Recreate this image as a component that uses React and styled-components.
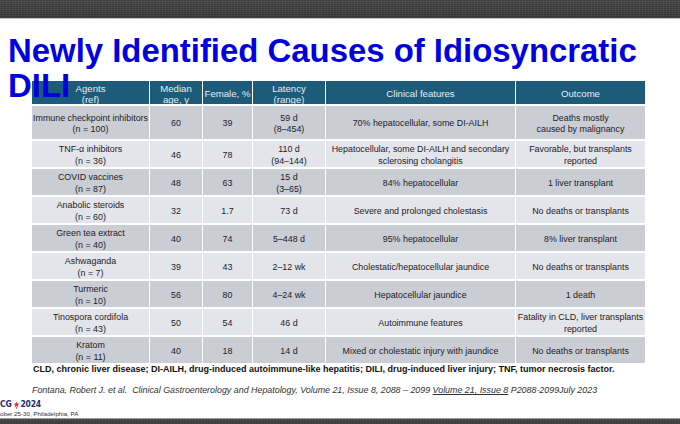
import React from "react";
import styled, { createGlobalStyle } from "styled-components";

const Global = createGlobalStyle`
  html, body { margin: 0; padding: 0; background: #ffffff; }
  body { font-family: "Liberation Sans", Arial, sans-serif; }
`;

const Screen = styled.div`
  width: 680px;
  height: 424px;
  display: flex;
  flex-direction: column;
  overflow: hidden;
  background: #ffffff;
`;

const DarkBar = styled.div`
  flex: none;
  height: ${(p) => p.$h}px;
  background:
    repeating-linear-gradient(90deg, rgba(255,255,255,0.03) 0 1px, rgba(0,0,0,0.04) 1px 3px),
    repeating-linear-gradient(0deg, rgba(255,255,255,0.03) 0 1px, rgba(0,0,0,0.05) 1px 2px),
    linear-gradient(#474747, #3a3a3a);
  border-bottom: ${(p) => (p.$line ? "1px solid #c4c4c4" : "none")};
  border-top: ${(p) => (p.$topline ? "1px solid #9a9a9a" : "none")};
`;

const Slide = styled.div`
  flex: 1;
  display: flex;
  flex-direction: column;
  min-height: 0;
`;

const Title = styled.h1`
  position: relative;
  z-index: 2;
  margin: 14px 0 -22px 0;
  padding-left: 8px;
  font-family: "Liberation Sans", Arial, sans-serif;
  font-weight: 700;
  font-size: 32.9px;
  line-height: 35px;
  color: #0000e1;
`;

const TitleLine = styled.span`
  display: block;
  width: fit-content;
  white-space: nowrap;
`;

const Table = styled.div`
  position: relative;
  z-index: 1;
  margin-left: 32px;
  display: grid;
  grid-template-columns: 117px 52px 49px 72px 189px 129px;
  grid-template-rows: 23px 33px repeat(8, 26px);
  column-gap: 1px;
  row-gap: 2px;
  width: 613px;
`;

const HeadCell = styled.div`
  background: #1d5b7b;
  color: #e4edf2;
  font-size: 9.6px;
  line-height: 10.5px;
  display: flex;
  align-items: center;
  justify-content: center;
  text-align: center;
  padding-top: 4px;
  overflow: hidden;
  white-space: pre-line;
`;

const Cell = styled.div`
  background: ${(p) => (p.$dark ? "#cbcdd5" : "#e4e5ea")};
  color: #222228;
  font-size: 8.9px;
  line-height: 11.5px;
  display: flex;
  align-items: center;
  justify-content: center;
  text-align: center;
  padding-top: 3px;
  white-space: pre-line;
`;

const Footnote = styled.p`
  margin: 1px 0 0 33px;
  font-size: 9px;
  line-height: 11px;
  font-weight: 700;
  color: #111111;
`;

const Citation = styled.p`
  margin: 10px 0 0 32px;
  font-size: 8.9px;
  line-height: 11px;
  font-style: italic;
  color: #333333;
`;

const Under = styled.span`
  text-decoration: underline;
`;

const Logo = styled.div`
  margin-top: 4px;
  display: flex;
  flex-direction: column;
  gap: 1px;
`;

const LogoMark = styled.div`
  display: flex;
  align-items: center;
  gap: 1px;
  font-family: "DejaVu Sans", sans-serif;
  font-stretch: condensed;
  font-weight: 700;
  font-size: 8.5px;
  line-height: 9px;
  color: #1d2c6e;
  letter-spacing: -0.2px;
`;

const LogoSub = styled.div`
  font-family: "Liberation Sans", Arial, sans-serif;
  font-size: 6.2px;
  line-height: 7px;
  color: #333333;
`;

const headers = [
  "Agents\n(ref)",
  "Median\nage, y",
  "Female, %",
  "Latency\n(range)",
  "Clinical features",
  "Outcome",
];

const rows = [
  ["Immune checkpoint inhibitors\n(n = 100)", "60", "39", "59 d\n(8–454)", "70% hepatocellular, some DI-AILH", "Deaths mostly\ncaused by malignancy"],
  ["TNF-α inhibitors\n(n = 36)", "46", "78", "110 d\n(94–144)", "Hepatocellular, some DI-AILH and secondary\nsclerosing cholangitis", "Favorable, but transplants\nreported"],
  ["COVID vaccines\n(n = 87)", "48", "63", "15 d\n(3–65)", "84% hepatocellular", "1 liver transplant"],
  ["Anabolic steroids\n(n = 60)", "32", "1.7", "73 d", "Severe and prolonged cholestasis", "No deaths or transplants"],
  ["Green tea extract\n(n = 40)", "40", "74", "5–448 d", "95% hepatocellular", "8% liver transplant"],
  ["Ashwaganda\n(n = 7)", "39", "43", "2–12 wk", "Cholestatic/hepatocellular jaundice", "No deaths or transplants"],
  ["Turmeric\n(n = 10)", "56", "80", "4–24 wk", "Hepatocellular jaundice", "1 death"],
  ["Tinospora cordifola\n(n = 43)", "50", "54", "46 d", "Autoimmune features", "Fatality in CLD, liver transplants\nreported"],
  ["Kratom\n(n = 11)", "40", "18", "14 d", "Mixed or cholestatic injury with jaundice", "No deaths or transplants"],
];

function Bell() {
  return (
    <svg width="7" height="8" viewBox="0 0 7 8" aria-hidden="true">
      <path d="M3.5 0.5 L4.3 2.6 L6.6 2.7 L4.8 4.1 L5.5 6.4 L3.5 5.1 L1.5 6.4 L2.2 4.1 L0.4 2.7 L2.7 2.6 Z" fill="#d8323f" />
      <rect x="3" y="6.2" width="1" height="1.5" fill="#d8323f" />
    </svg>
  );
}

export default function App() {
  return (
    <Screen>
      <Global />
      <DarkBar $h={18} $line />
      <Slide>
        <Title>
          <TitleLine>Newly Identified Causes of Idiosyncratic</TitleLine>
          <TitleLine>DILI</TitleLine>
        </Title>
        <Table>
          {headers.map((h) => (
            <HeadCell key={h}>{h}</HeadCell>
          ))}
          {rows.map((r, i) =>
            r.map((c, j) => (
              <Cell key={`${i}-${j}`} $dark={i % 2 === 0}>
                {c}
              </Cell>
            ))
          )}
        </Table>
        <Footnote>
          CLD, chronic liver disease; DI-AILH, drug-induced autoimmune-like hepatitis; DILI, drug-induced liver injury; TNF, tumor necrosis factor.
        </Footnote>
        <Citation>
          Fontana, Robert J. et al.&nbsp; Clinical Gastroenterology and Hepatology, Volume 21, Issue 8, 2088 – 2099 <Under>Volume 21, Issue 8</Under> P2088-2099July 2023
        </Citation>
        <Logo>
          <LogoMark>
            <span>CG</span>
            <Bell />
            <span>2024</span>
          </LogoMark>
          <LogoSub>ober 25-30, Philadelphia, PA</LogoSub>
        </Logo>
      </Slide>
      <DarkBar $h={5} $topline />
    </Screen>
  );
}
